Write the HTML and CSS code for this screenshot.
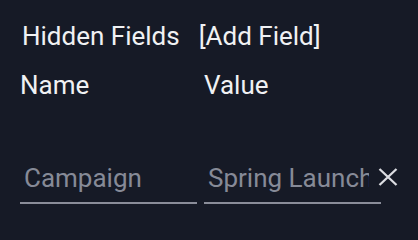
FILE: index.html
```html
<!DOCTYPE html>
<html>
<head>
<meta charset="utf-8">
<link rel="stylesheet" href="styles.css">
</head>
<body>
<div class="panel">
  <div class="header">
    <span class="title">Hidden Fields</span>
    <span class="add">[Add Field]</span>
  </div>
  <div class="cols">
    <span class="col">Name</span>
    <span class="col">Value</span>
  </div>
  <div class="row">
    <input class="field name" type="text" placeholder="Campaign">
    <input class="field value" type="text" placeholder="Spring Launch">
    <button class="remove" aria-label="Remove">
      <svg width="20" height="18" viewBox="0 0 20 18"><path d="M1.5 1L18.5 17M18.5 1L1.5 17" stroke="#dcdde2" stroke-width="2.3" fill="none"/></svg>
    </button>
  </div>
</div>
</body>
</html>
```
FILE: styles.css
```css
html, body {
  margin: 0;
  padding: 0;
  background: #161a26;
}
.panel {
  width: 418px;
  height: 233px;
  overflow: hidden;
  box-sizing: border-box;
  padding: 21px 0 0 20px;
  font-family: Roboto, "Noto Sans", sans-serif;
  font-size: 26px;
  line-height: 30px;
  color: #f0f1f3;
}
.header {
  display: flex;
  gap: 19px;
  padding-left: 2px;
}
.cols {
  display: flex;
  margin-top: 19px;
}
.col {
  width: 184px;
}
.row {
  display: flex;
  align-items: flex-start;
  gap: 7px;
  margin-top: 63px;
}
.field {
  width: 177px;
  box-sizing: border-box;
  background: transparent;
  border: none;
  border-bottom: 2px solid #8a8d99;
  padding: 0 12px 9px 4px;
  margin: 0;
  font-family: Roboto, "Noto Sans", sans-serif;
  font-size: 26px;
  line-height: 30px;
  height: 41px;
  color: #f0f1f3;
  outline: none;
}
.field::placeholder {
  color: #868a97;
  opacity: 1;
}
.remove {
  background: none;
  border: none;
  padding: 0;
  margin: 5px 0 0 -10px;
  width: 20px;
  height: 18px;
  display: flex;
}
```
